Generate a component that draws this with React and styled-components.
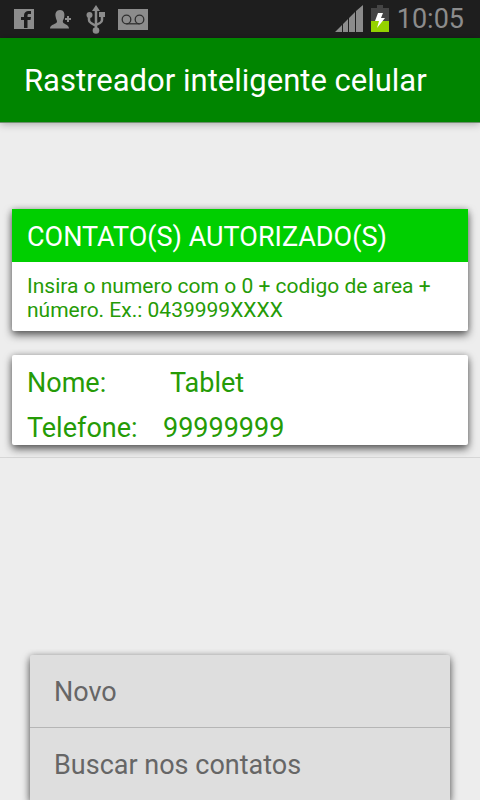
import React from "react";
import styled, { createGlobalStyle } from "styled-components";

const GlobalStyle = createGlobalStyle`
  * {
    box-sizing: border-box;
  }
  body {
    margin: 0;
    background: #ededed;
    font-family: Roboto, "Noto Sans", sans-serif;
  }
`;

const Screen = styled.div`
  display: flex;
  flex-direction: column;
  height: 100vh;
  overflow: hidden;
`;

// Android status bar
const StatusBar = styled.div`
  flex: none;
  display: flex;
  align-items: center;
  justify-content: space-between;
  height: 38px;
  padding: 0 16px 0 12px;
  background: #1e1e1e;
  color: #8c8c8c;
`;
const StatusGroup = styled.div`
  display: flex;
  align-items: center;
  gap: ${({ gap }) => gap};

  svg {
    display: block;
  }
`;
const Clock = styled.time`
  font-size: 27px;
  font-weight: 400;
  line-height: 38px;
`;

const AppBar = styled.header`
  flex: none;
  display: flex;
  align-items: center;
  height: 85px;
  padding: 2px 24px 0;
  background: #008500;
  border-bottom: 1px solid #6f8f6f;
  box-shadow: 0 1px 8px rgba(0, 0, 0, 0.3);
`;
const Title = styled.h1`
  margin: 0;
  color: #fff;
  font-size: 31px;
  font-weight: 400;
  line-height: 36px;
  white-space: nowrap;
`;

const Content = styled.main`
  flex: none;
  display: flex;
  flex-direction: column;
  gap: 24px;
  padding: 86px 12px 12px;
  border-bottom: 1px solid #d6d6d6;
`;
const Card = styled.section`
  overflow: hidden;
  border-radius: ${({ square }) => (square ? "0 0 2px 2px" : "2px")};
  background: #fff;
  color: #259b06;
  box-shadow: 0 4px 8px rgba(0, 0, 0, 0.6), 0 0 6px rgba(0, 0, 0, 0.2);
`;
const CardTitle = styled.h2`
  margin: 0;
  padding: 12px 15px 9px;
  background: #00cf00;
  color: #fff;
  font-size: 27px;
  font-weight: 400;
  line-height: 32px;
`;
const Hint = styled.p`
  margin: 0;
  padding: 12px 15px 9px;
  font-size: 21px;
  line-height: 24px;
`;

const Fields = styled.dl`
  margin: 0;
  padding: 6px 15px 0;
  font-size: 27px;
`;
const Field = styled.div`
  display: flex;
  height: ${({ last }) => (last ? "39px" : "45px")};
  line-height: 45px;
`;
const Label = styled.dt`
  flex: none;
  width: ${({ width }) => width};
`;
const Value = styled.dd`
  margin: 0;
`;

// Options menu at the bottom of the screen
const Menu = styled.nav`
  flex: none;
  display: flex;
  flex-direction: column;
  margin: auto 30px 0;
  border-radius: 2px 2px 0 0;
  background: #dedede;
  box-shadow: 0 4px 8px rgba(0, 0, 0, 0.6), 0 0 6px rgba(0, 0, 0, 0.2);
`;
const MenuItem = styled.button`
  height: 73px;
  padding: 2px 24px 0;
  border: 0;
  background: none;
  color: #666;
  font: inherit;
  font-size: 27px;
  line-height: 32px;
  text-align: left;

  &:first-child {
    height: 72px;
  }
  & + & {
    border-top: 1px solid #b5b5b5;
  }
`;

const FacebookIcon = () => (
  <svg width="24" height="24" viewBox="0 0 24 24">
    <path d="M2 2h20v20H2z" fill="#8c8c8c" />
    <path
      d="M12 21v-8H9v-3h3V8.500C12 5.500 14 4 16.500 4H19v3h-2c-1.200 0-1.500.5-1.500 1.500V10H19l-.5 3h-3v8z"
      fill="#1e1e1e"
    />
  </svg>
);

const AddContactIcon = () => (
  <svg width="24" height="24" viewBox="0 0 24 24" fill="currentColor">
    <path d="M11 3c3.800 0 4.800 3 4.300 6.500-.3 2.500-1.500 3.500-1.500 5 0 3 6.200 2.500 6.200 7H1c0-4.500 7-4 7-7 0-1.500-1.100-2.500-1.400-5C6 6 7.200 3 11 3z" />
    <path d="M18 9h2v2h2v2h-2v2h-2v-2h-2v-2h2z" />
  </svg>
);

const UsbIcon = () => (
  <svg width="19" height="30" viewBox="1 0 19 30">
    <g fill="none" stroke="currentColor" strokeWidth="2.500">
      <path d="M11 5v20M4 12v4q0 2 2 3l5 3M17 11v5q0 2-2 3l-4 2" />
    </g>
    <g fill="currentColor">
      <path d="M11 1l4 6H7zM14 8h6v5h-6z" />
      <circle cx="4.500" cy="11" r="3" />
      <circle cx="11" cy="26.500" r="3.300" />
    </g>
  </svg>
);

const VoicemailIcon = () => (
  <svg width="30" height="21" viewBox="0 0 30 21">
    <path d="M0 0h30v21H0z" fill="currentColor" />
    <g fill="none" stroke="#303030" strokeWidth="1.300">
      <circle cx="8.500" cy="10.500" r="4.300" />
      <circle cx="21.500" cy="10.500" r="4.300" />
      <path d="M8.500 14.800h13" />
    </g>
  </svg>
);

const SignalIcon = () => (
  <svg width="28" height="28" viewBox="0 0 28 28" fill="currentColor">
    <path d="M0 27l7-7v7zM8 19l5-5v13H8zM14 13l6-6v20h-6zM21 6l7-6v27h-7z" />
  </svg>
);

const BatteryIcon = () => (
  <svg width="18" height="28" viewBox="0 0 18 28">
    <path d="M6 0h6v3h6v13H0V3h6z" fill="#444" />
    <path d="M0 16h18v11H0z" fill="#95d300" />
    <path d="M7 8h5l-2 5h4L6 23l2-7H4z" fill="#fff" />
  </svg>
);

const menuItems = ["Novo", "Buscar nos contatos"];

const App = () => {
  return (
    <>
      <GlobalStyle />
      <Screen>
        <StatusBar>
          <StatusGroup gap="13px">
            <FacebookIcon />
            <AddContactIcon />
            <UsbIcon />
            <VoicemailIcon />
          </StatusGroup>
          <StatusGroup gap="8px">
            <SignalIcon />
            <BatteryIcon />
            <Clock>10:05</Clock>
          </StatusGroup>
        </StatusBar>
        <AppBar>
          <Title>Rastreador inteligente celular</Title>
        </AppBar>
        <Content>
          <Card square>
            <CardTitle>CONTATO(S) AUTORIZADO(S)</CardTitle>
            <Hint>
              Insira o numero com o 0 + codigo de area + número. Ex.: 0439999XXXX
            </Hint>
          </Card>
          <Card>
            <Fields>
              <Field>
                <Label width="143px">Nome:</Label>
                <Value>Tablet</Value>
              </Field>
              <Field last>
                <Label width="136px">Telefone:</Label>
                <Value>99999999</Value>
              </Field>
            </Fields>
          </Card>
        </Content>
        <Menu>
          {menuItems.map((item) => (
            <MenuItem key={item} type="button">
              {item}
            </MenuItem>
          ))}
        </Menu>
      </Screen>
    </>
  );
};

export default App;
